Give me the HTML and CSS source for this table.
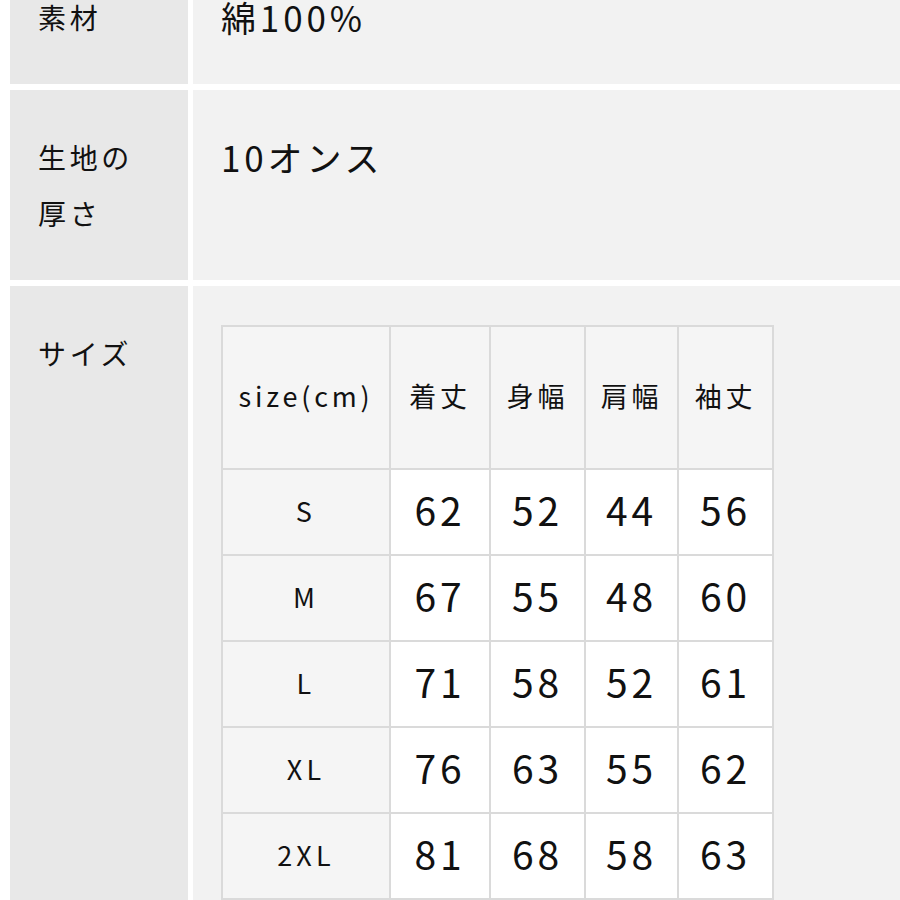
FILE: index.html
```html
<!DOCTYPE html>
<html lang="ja">
<head>
<meta charset="utf-8">
<link rel="stylesheet" href="styles.css">
</head>
<body>
<div class="sheet">
  <div class="label">素材</div>
  <div class="value">綿100%</div>

  <div class="label">生地の<br>厚さ</div>
  <div class="value">10オンス</div>

  <div class="label">サイズ</div>
  <div class="value">
    <table class="sizes">
      <tr class="head">
        <th class="c1">size(cm)</th><th class="c2">着丈</th><th class="c3">身幅</th><th class="c4">肩幅</th><th class="c5">袖丈</th>
      </tr>
      <tr><th>S</th><td>62</td><td>52</td><td>44</td><td>56</td></tr>
      <tr><th>M</th><td>67</td><td>55</td><td>48</td><td>60</td></tr>
      <tr><th>L</th><td>71</td><td>58</td><td>52</td><td>61</td></tr>
      <tr><th>XL</th><td>76</td><td>63</td><td>55</td><td>62</td></tr>
      <tr><th>2XL</th><td>81</td><td>68</td><td>58</td><td>63</td></tr>
    </table>
  </div>
</div>
</body>
</html>
```
FILE: styles.css
```css
html, body {
  margin: 0;
  padding: 0;
  background: #ffffff;
}
body {
  padding-left: 10px;
  font-family: "Noto Sans CJK JP", "Noto Sans", sans-serif;
  color: #111111;
  overflow: hidden;
}
.sheet {
  margin-top: -50px;
  display: grid;
  grid-template-columns: 178px 1fr;
  column-gap: 5px;
  row-gap: 6px;
}
.label {
  background: #e8e8e8;
  padding: 39px 0 39px 28px;
  font-size: 28px;
  line-height: 56px;
  letter-spacing: 0.13em;
}
.value {
  background: #f2f2f2;
  padding: 39px 0 39px 28px;
  font-size: 35px;
  line-height: 56px;
  letter-spacing: 0.11em;
}
.sizes {
  border-collapse: collapse;
  letter-spacing: 0.12em;
}
.sizes th, .sizes td {
  border: 2px solid #dadada;
  text-align: center;
  vertical-align: middle;
  padding: 0;
  font-weight: normal;
}
.sizes th {
  background: #f5f5f5;
  font-size: 27px;
  padding-bottom: 2px;
}
.sizes .head th {
  height: 137px;
  padding-bottom: 4px;
  letter-spacing: 0.14em;
}
.sizes td {
  background: #ffffff;
  font-size: 39px;
  height: 77px;
  padding-bottom: 7px;
  letter-spacing: 0.1em;
}
.c1 { width: 166px; }
.c2 { width: 98px; }
.c3 { width: 93px; }
.c4 { width: 91px; }
.c5 { width: 93px; }
```
